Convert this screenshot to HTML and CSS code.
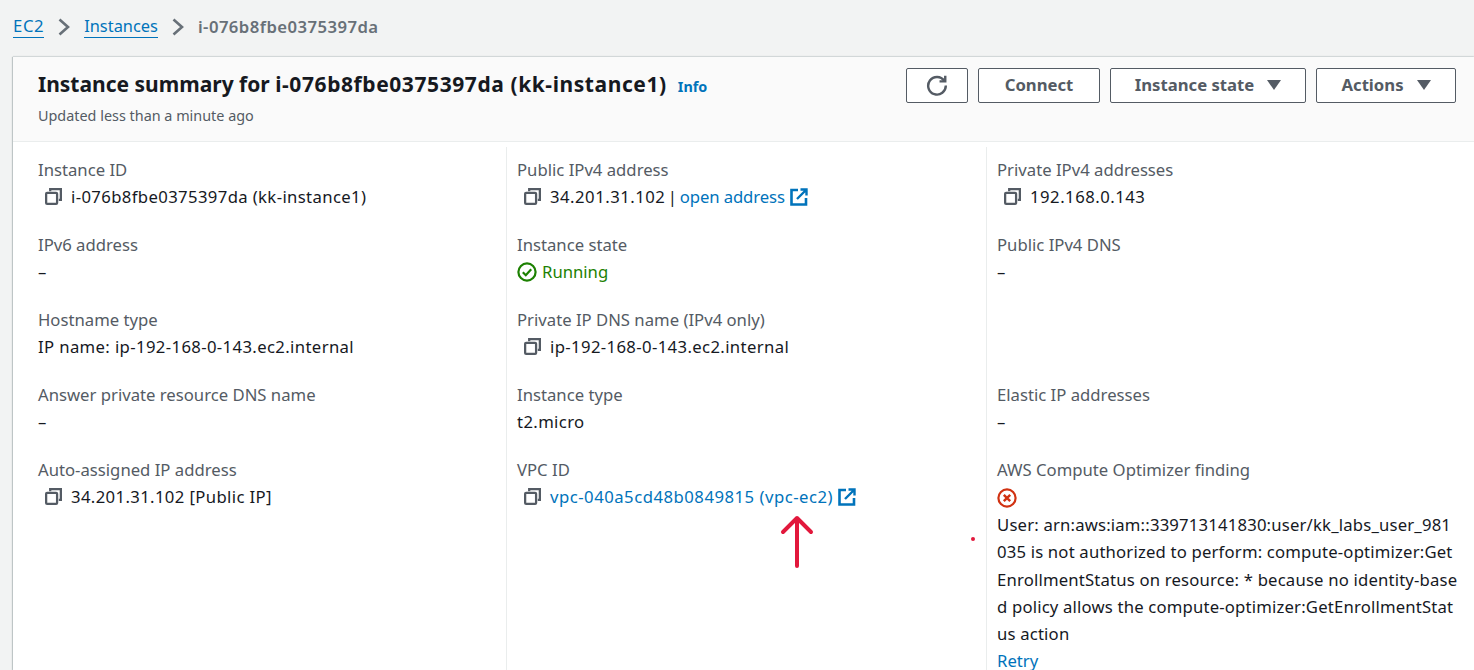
FILE: index.html
```html
<!DOCTYPE html>
<html lang="en">
<head>
<meta charset="utf-8">
<title>Instance summary</title>
<link rel="stylesheet" href="styles.css">
</head>
<body>
<svg class="defs" width="0" height="0" aria-hidden="true">
  <symbol id="copy" viewBox="0 0 18 18"><rect x="1.2" y="5.2" width="11.6" height="11.6" rx="1" fill="none" stroke="currentColor" stroke-width="2.4"/><path d="M5.5 3.4V1.2h11.3v11.3h-2.2" fill="none" stroke="currentColor" stroke-width="2.4"/></symbol>
  <symbol id="ext" viewBox="0 0 18 18"><path d="M8 2H1.5v14.5H16V10" fill="none" stroke="currentColor" stroke-width="2.6"/><path d="M7 11 16 2M10.5 1.5H16.5V7.5" fill="none" stroke="currentColor" stroke-width="2.4"/></symbol>
</svg>
<nav class="crumbs">
  <a href="#" class="crumb-ec2">EC2</a>
  <svg class="chev" viewBox="0 0 12 18"><path d="M1.5 1.5l8.5 7.5-8.5 7.5" fill="none" stroke="currentColor" stroke-width="2.6"/></svg>
  <a href="#" class="crumb-inst">Instances</a>
  <svg class="chev" viewBox="0 0 12 18"><path d="M1.5 1.5l8.5 7.5-8.5 7.5" fill="none" stroke="currentColor" stroke-width="2.6"/></svg>
  <span class="current">i-076b8fbe0375397da</span>
</nav>
<main class="card">
  <header class="head">
    <div class="titles">
      <div class="title-row">
        <h1>Instance summary for <span class="title-id">i-076b8fbe0375397da (kk-instance1)</span></h1>
        <a class="info" href="#">Info</a>
      </div>
      <p class="updated">Updated less than a minute ago</p>
    </div>
    <div class="actions">
      <button class="btn refresh" aria-label="Refresh"><svg viewBox="0 0 20 20" width="22" height="22"><path d="M16.6 6.2A8 8 0 1 0 18 10.5" fill="none" stroke="currentColor" stroke-width="2.2"/><path d="M17.5 1.5v5.2h-5.2" fill="none" stroke="currentColor" stroke-width="2.2"/></svg></button>
      <button class="btn connect">Connect</button>
      <button class="btn state">Instance state<span class="caret"></span></button>
      <button class="btn menu">Actions<span class="caret"></span></button>
    </div>
  </header>
  <div class="cols">
    <section class="col first">
      <div class="item"><div class="label">Instance ID</div><div class="value copy"><svg class="ic"><use href="#copy"/></svg>i-076b8fbe0375397da (kk-instance1)</div></div>
      <div class="item"><div class="label">IPv6 address</div><div class="value">–</div></div>
      <div class="item"><div class="label">Hostname type</div><div class="value">IP name: ip-192-168-0-143.ec2.internal</div></div>
      <div class="item"><div class="label">Answer private resource DNS name</div><div class="value">–</div></div>
      <div class="item"><div class="label">Auto-assigned IP address</div><div class="value copy"><svg class="ic"><use href="#copy"/></svg>34.201.31.102 [Public IP]</div></div>
    </section>
    <section class="col">
      <div class="item"><div class="label">Public IPv4 address</div><div class="value copy wide tight"><svg class="ic"><use href="#copy"/></svg>34.201.31.102 | <a href="#" class="plain">open address</a><svg class="ext"><use href="#ext"/></svg></div></div>
      <div class="item"><div class="label">Instance state</div><div class="value running"><svg viewBox="0 0 20 20" width="20" height="20"><circle cx="10" cy="10" r="8.6" fill="none" stroke="currentColor" stroke-width="2.2"/><path d="M5.8 10.2l3 3 5.4-6" fill="none" stroke="currentColor" stroke-width="2.2"/></svg>Running</div></div>
      <div class="item"><div class="label">Private IP DNS name (IPv4 only)</div><div class="value copy"><svg class="ic"><use href="#copy"/></svg>ip-192-168-0-143.ec2.internal</div></div>
      <div class="item"><div class="label">Instance type</div><div class="value">t2.micro</div></div>
      <div class="item"><div class="label">VPC ID</div><div class="value copy wide"><svg class="ic"><use href="#copy"/></svg><a href="#">vpc-040a5cd48b0849815 (vpc-ec2)</a><svg class="ext"><use href="#ext"/></svg></div></div>
    </section>
    <section class="col">
      <div class="item"><div class="label">Private IPv4 addresses</div><div class="value copy wide"><svg class="ic"><use href="#copy"/></svg>192.168.0.143</div></div>
      <div class="item"><div class="label">Public IPv4 DNS</div><div class="value">–</div></div>
      <div class="item"></div>
      <div class="item"><div class="label">Elastic IP addresses</div><div class="value">–</div></div>
      <div class="item">
        <div class="label">AWS Compute Optimizer finding</div>
        <svg class="err" viewBox="0 0 20 20" width="20" height="20"><circle cx="10" cy="10" r="8.6" fill="none" stroke="currentColor" stroke-width="2.2"/><path d="M6.8 6.8l6.4 6.4M13.2 6.8l-6.4 6.4" fill="none" stroke="currentColor" stroke-width="2.4"/></svg>
        <div class="msg">User: arn:aws:iam::339713141830:user/kk_labs_user_981<br>035 is not authorized to perform: compute-optimizer:Get<br>EnrollmentStatus on resource: * because no identity-base<br>d policy allows the compute-optimizer:GetEnrollmentStat<br>us action</div>
        <a href="#" class="retry">Retry</a>
      </div>
    </section>
  </div>
  <svg class="arrow" viewBox="0 0 36 56" width="36" height="56"><path d="M18 52V4M4 18 18 4l14 14" fill="none" stroke="#e2183c" stroke-width="4" stroke-linecap="round" stroke-linejoin="round"/></svg>
  <span class="dot"></span>
</main>
</body>
</html>
```
FILE: styles.css
```css
* { box-sizing: border-box; }
html, body { height: 100%; }
body {
  margin: 0;
  height: 670px;
  overflow: hidden;
  background: #f2f3f3;
  color: #16191f;
  font-family: "Noto Sans", "Open Sans", sans-serif;
  font-size: 16.7px;
  line-height: 27px;
}
a { color: #0073bb; text-decoration: none; }
.defs { position: absolute; }
.crumbs {
  display: flex;
  align-items: center;
  height: 57px;
  padding: 0 0 4px 13px;
}
.crumbs a { border-bottom: 1px solid #0073bb; line-height: 22px; }
.crumb-ec2 { letter-spacing: .6px; }
.crumb-inst { font-size: 16.4px; }
.chev { width: 12px; height: 18px; margin: 0 14px; color: #687078; }
.current { color: #687078; font-weight: 600; letter-spacing: .45px; }
.card {
  position: relative;
  margin-left: 13px;
  height: 613px;
  background: #fff;
  box-shadow: -1px 0 1px rgba(0, 28, 36, .2), 0 -1px 1px rgba(0, 28, 36, .1);
}
.head {
  display: flex;
  justify-content: space-between;
  height: 85px;
  padding: 11px 18px 0 25px;
  background: #fafafa;
  border-bottom: 1px solid #eaeded;
}
.title-row { display: flex; align-items: baseline; gap: 11px; height: 32px; }
h1 { margin: 0; font-size: 21px; line-height: 32px; font-weight: 700; white-space: nowrap; }
.title-id { letter-spacing: .58px; }
.info { font-size: 14.4px; font-weight: 700; }
.updated { margin: 0; padding-top: 4px; font-size: 14.4px; line-height: 24px; color: #545b64; }
.actions { display: flex; gap: 10px; }
.btn {
  display: flex;
  align-items: center;
  justify-content: center;
  height: 35px;
  padding: 0 0 2px;
  background: #fff;
  border: 1px solid #545b64;
  border-radius: 2px;
  color: #545b64;
  font: 700 16.7px "Noto Sans", sans-serif;
}
.refresh { width: 62px; }
.connect { width: 122px; }
.state { width: 196px; }
.menu { width: 140px; }
.caret {
  width: 0; height: 0;
  margin-left: 13px;
  border-left: 7px solid transparent;
  border-right: 7px solid transparent;
  border-top: 10px solid #545b64;
}
.cols {
  display: grid;
  grid-template-columns: 493px 480px 1fr;
  padding-top: 5px;
}
.col { padding: 9px 0 0 10px; border-left: 1px solid #eaeded; height: 530px; }
.col.first { border-left: 0; padding-left: 25px; }
.item { height: 75px; }
.label { color: #545b64; height: 27px; white-space: nowrap; }
.value { display: flex; align-items: center; white-space: pre; height: 27px; letter-spacing: .37px; }
.wide { letter-spacing: .5px; }
.tight { word-spacing: -2.5px; }
.plain { letter-spacing: -.1px; word-spacing: 0; }
.copy { padding-left: 7px; }
.ic { width: 17px; height: 17px; margin-right: 9px; color: #545b64; }
.ext { width: 18px; height: 18px; margin-left: 5px; color: #0073bb; }
.running { color: #1d8102; gap: 5px; letter-spacing: 0; }
.err { display: block; color: #d13212; margin: 5px 0 3px; }
.msg { white-space: nowrap; letter-spacing: .18px; line-height: 27.25px; }
.retry { display: block; }
.arrow { position: absolute; left: 766px; top: 457px; }
.dot { position: absolute; left: 958px; top: 480px; width: 4px; height: 4px; border-radius: 50%; background: #e2183c; }
```
